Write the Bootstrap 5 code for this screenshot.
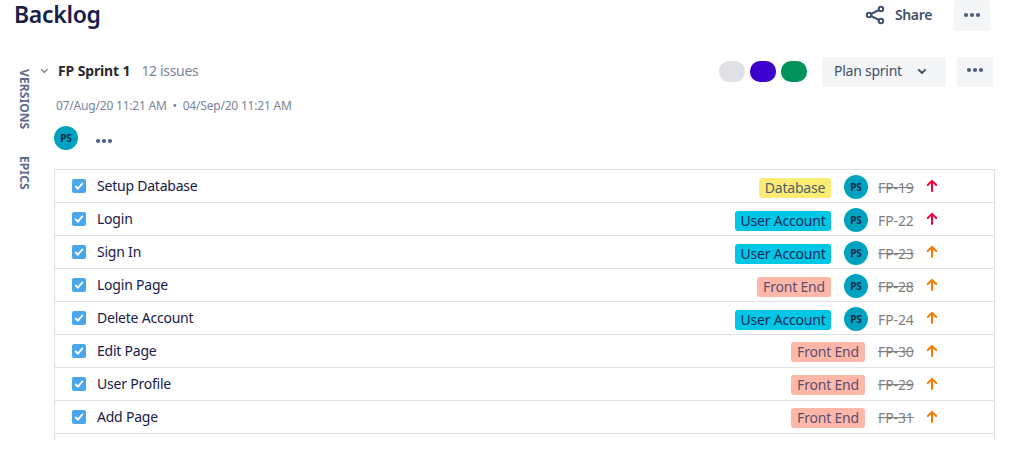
<!DOCTYPE html>
<html lang="en">
<head>
<meta charset="utf-8">
<meta name="viewport" content="width=device-width, initial-scale=1">
<title>Backlog</title>
<link href="https://cdn.jsdelivr.net/npm/bootstrap@5.3.0/dist/css/bootstrap.min.css" rel="stylesheet">
<style>
  body { font-family: "Noto Sans", "Open Sans", sans-serif; font-size: 14px; line-height: 20px; color: #172049; background: #fff; height: 471px; overflow: hidden; white-space: nowrap; }
  .topbar { height: 31px; padding: 0 24px 0 14px; }
  .page-title { font-size: 23px; line-height: 28px; font-weight: 600; letter-spacing: -.3px; color: #172049; }
  .share { color: #42526e; font-weight: 600; padding-right: 22px; letter-spacing: -.35px; line-height: 18px; margin-bottom: 2px; }
  .share-icon { margin-right: 9px; margin-bottom: 1px; }
  .tool { background: #f4f5f7; border-radius: 3px; color: #505f79; }
  .tool-dots { width: 36px; height: 31px; }
  .topbar .tool-dots { padding-bottom: 2px; }
  .side { width: 54px; padding: 14px 0 0 16px; gap: 27px; }
  .side span { writing-mode: vertical-rl; font-size: 12px; line-height: 16px; font-weight: 700; color: #5e6c8c; letter-spacing: .1px; }
  .content { padding-top: 2px; margin-right: 19px; }
  .sprint-head { height: 30px; padding-right: 2px; }
  .chev { margin: 0 0 2px -14px; }
  .sprint-name { font-weight: 700; color: #2a2a2e; margin: 0 0 2px 9px; letter-spacing: -.13px; }
  .count { color: #7a869a; margin: 0 0 2px 11px; letter-spacing: -.33px; }
  .pill { width: 26px; height: 21px; border-radius: 10px; margin: 0 5px 1px 0; }
  .plan { width: 124px; height: 30px; padding: 0 19px 2px 12px; margin-left: 10px; margin-right: 11px; color: #42526e; letter-spacing: -.25px; }
  .sprint-head .tool-dots { height: 30px; padding-bottom: 4px; }
  .dates { font-size: 12px; line-height: 16px; color: #7a869a; margin: 11px 0 0 2px; letter-spacing: -.2px; }
  .people { margin-top: 12px; }
  .people svg { margin: 6px 0 0 17px; }
  .avatar { width: 24px; height: 24px; border-radius: 50%; background: #00a3bf; color: #172b4d; font-size: 10px; font-weight: 700; line-height: 24px; text-align: center; flex: none; }
  .issues { margin-top: 19px; height: 271px; border: 1px solid #dfe1e6; border-bottom: 0; }
  .issue { height: 33px; border-bottom: 1px solid #dfe1e6; padding: 0 56px 0 17px; }
  .summary { margin-left: 11px; letter-spacing: -.22px; }
  .tag { height: 20px; line-height: 20px; border-radius: 3px; margin: 3px 13px 0 0; text-align: center; letter-spacing: -.2px; }
  .tag-db { background: #fbec74; color: #505f6f; width: 72px; }
  .tag-user { background: #00c7e6; color: #172b5d; width: 96px; }
  .tag-front { background: #ffb8a8; color: #5a4f73; width: 74px; }
  .issue .avatar { margin: 2px 10px 0 0; }
  .key { width: 36px; margin: 3px 12px 0 0; color: #808080; letter-spacing: -.1px; }
  .flat .tag, .flat .key { margin-top: 1px; }
  svg { flex: none; display: block; }
  .high { color: #f5003d; }
  .medium { color: #f57c00; }
</style>
</head>
<body>
<svg width="0" height="0" class="d-none">
  <symbol id="check" viewBox="0 0 14 14"><rect width="14" height="14" rx="2" fill="#4ba6ea"/><path d="M3.8 7.5l2.1 2.2 4.4-5.2" fill="none" stroke="#fff" stroke-width="1.9" stroke-linecap="round" stroke-linejoin="round"/></symbol>
  <symbol id="up" viewBox="0 0 12 14"><path d="M6 12.1V2.5M1.8 6L6 1.9 10.2 6" fill="none" stroke="currentColor" stroke-width="2" stroke-linecap="round" stroke-linejoin="round"/></symbol>
  <symbol id="dots" viewBox="0 0 18 6"><circle cx="3" cy="3" r="2.1"/><circle cx="9" cy="3" r="2.1"/><circle cx="15" cy="3" r="2.1"/></symbol>
</svg>

<header class="topbar d-flex justify-content-between">
  <h1 class="page-title m-0">Backlog</h1>
  <div class="d-flex align-items-center">
    <svg class="share-icon" width="22" height="20" viewBox="0 0 22 20" fill="none" stroke="#42526e" stroke-width="2"><circle cx="5" cy="10" r="2.2"/><circle cx="17" cy="4" r="2.2"/><circle cx="17" cy="16" r="2.2"/><path d="M7 9l8-4M7 11l8 4"/></svg>
    <span class="share">Share</span>
    <span class="tool tool-dots d-flex align-items-center justify-content-center"><svg width="18" height="6" fill="currentColor"><use href="#dots"/></svg></span>
  </div>
</header>

<div class="d-flex pt-4">
  <nav class="side d-flex flex-column align-items-start"><span>VERSIONS</span><span>EPICS</span></nav>
  <main class="content flex-grow-1">
    <div class="sprint-head d-flex align-items-center">
      <svg class="chev" width="9" height="8" viewBox="0 0 9 8" fill="none" stroke="#6b7280" stroke-width="1.2"><path d="M1 2.2l3.3 3.3 3.3-3.3"/></svg>
      <span class="sprint-name">FP Sprint 1</span>
      <span class="count">12 issues</span>
      <span class="pill ms-auto" style="background:#dfe1e6"></span>
      <span class="pill" style="background:#3d00cc"></span>
      <span class="pill" style="background:#00945b"></span>
      <span class="tool plan d-flex align-items-center justify-content-between">Plan sprint <svg width="10" height="8" viewBox="0 0 10 8" fill="none" stroke="#42526e" stroke-width="1.9" stroke-linecap="round" stroke-linejoin="round"><path d="M1.8 2.8L5 6l3.2-3.2"/></svg></span>
      <span class="tool tool-dots d-flex align-items-center justify-content-center"><svg width="18" height="6" fill="currentColor"><use href="#dots"/></svg></span>
    </div>
    <div class="dates">07/Aug/20 11:21 AM &nbsp;•&nbsp; 04/Sep/20 11:21 AM</div>
    <div class="people d-flex align-items-center">
      <span class="avatar">PS</span>
      <svg width="18" height="6" fill="#505f8a"><use href="#dots"/></svg>
    </div>
    <div class="issues">
      <div class="issue d-flex align-items-center"><svg width="14" height="14"><use href="#check"/></svg><span class="summary me-auto">Setup Database</span><span class="tag tag-db">Database</span><span class="avatar">PS</span><s class="key">FP-19</s><svg class="high" width="12" height="14"><use href="#up"/></svg></div>
      <div class="issue d-flex align-items-center"><svg width="14" height="14"><use href="#check"/></svg><span class="summary me-auto">Login</span><span class="tag tag-user">User Account</span><span class="avatar">PS</span><span class="key">FP-22</span><svg class="high" width="12" height="14"><use href="#up"/></svg></div>
      <div class="issue d-flex align-items-center"><svg width="14" height="14"><use href="#check"/></svg><span class="summary me-auto">Sign In</span><span class="tag tag-user">User Account</span><span class="avatar">PS</span><s class="key">FP-23</s><svg class="medium" width="12" height="14"><use href="#up"/></svg></div>
      <div class="issue d-flex align-items-center"><svg width="14" height="14"><use href="#check"/></svg><span class="summary me-auto">Login Page</span><span class="tag tag-front">Front End</span><span class="avatar">PS</span><s class="key">FP-28</s><svg class="medium" width="12" height="14"><use href="#up"/></svg></div>
      <div class="issue d-flex align-items-center"><svg width="14" height="14"><use href="#check"/></svg><span class="summary me-auto">Delete Account</span><span class="tag tag-user">User Account</span><span class="avatar">PS</span><span class="key">FP-24</span><svg class="medium" width="12" height="14"><use href="#up"/></svg></div>
      <div class="issue flat d-flex align-items-center"><svg width="14" height="14"><use href="#check"/></svg><span class="summary me-auto">Edit Page</span><span class="tag tag-front">Front End</span><s class="key">FP-30</s><svg class="medium" width="12" height="14"><use href="#up"/></svg></div>
      <div class="issue flat d-flex align-items-center"><svg width="14" height="14"><use href="#check"/></svg><span class="summary me-auto">User Profile</span><span class="tag tag-front">Front End</span><s class="key">FP-29</s><svg class="medium" width="12" height="14"><use href="#up"/></svg></div>
      <div class="issue flat d-flex align-items-center"><svg width="14" height="14"><use href="#check"/></svg><span class="summary me-auto">Add Page</span><span class="tag tag-front">Front End</span><s class="key">FP-31</s><svg class="medium" width="12" height="14"><use href="#up"/></svg></div>
    </div>
  </main>
</div>
<script src="https://cdn.jsdelivr.net/npm/bootstrap@5.3.0/dist/js/bootstrap.bundle.min.js"></script>
</body>
</html>
